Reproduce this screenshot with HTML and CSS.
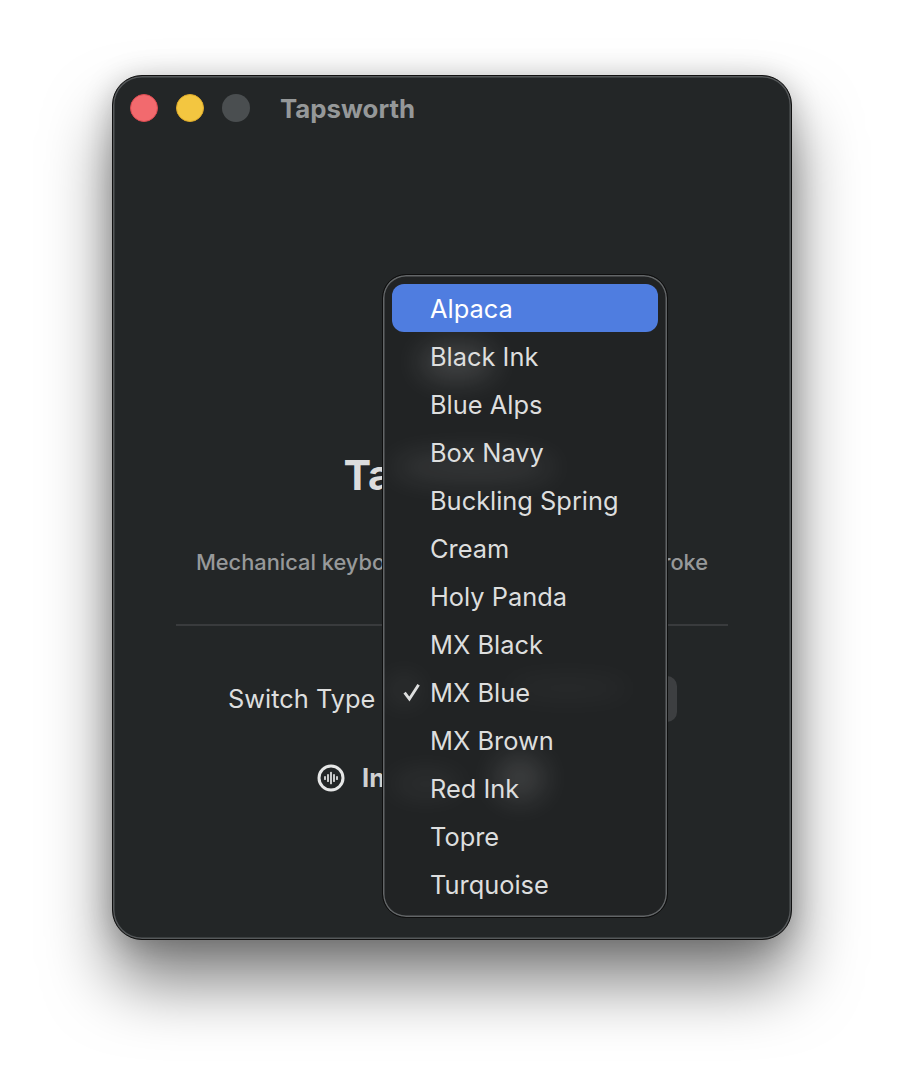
FILE: index.html
```html
<!DOCTYPE html>
<html lang="en">
<head>
<meta charset="utf-8">
<title>Tapsworth</title>
<link rel="stylesheet" href="styles.css">
</head>
<body>
<div class="window">
  <header class="titlebar">
    <span class="light red"></span>
    <span class="light yellow"></span>
    <span class="light gray"></span>
    <span class="window-title">Tapsworth</span>
  </header>
  <main class="content">
    <h1 class="app-name">Tapsworth</h1>
    <p class="tagline">Mechanical keyboard sounds for every keystroke</p>
    <hr class="divider">
    <div class="field">
      <span class="field-label">Switch Type</span>
      <div class="select"></div>
    </div>
    <div class="action">
      <svg class="wave-icon" viewBox="0 0 28 28" width="28" height="28" fill="none" stroke="currentColor" aria-hidden="true">
        <circle cx="14" cy="14" r="12" stroke-width="3"/>
        <path d="M8 12.8v2.4M11 10.8v6.4M14 8.6v10.8M17 10.8v6.4M20 12.8v2.4" stroke-width="1.7" stroke-linecap="round"/>
      </svg>
      <span class="action-label">In</span>
    </div>
  </main>
  <div class="menu">
    <span class="glow g1"></span>
    <span class="glow g2"></span>
    <span class="glow g3"></span>
    <span class="glow g4"></span>
    <span class="glow g5"></span>
    <span class="glow g6"></span>
    <div class="item active">Alpaca</div>
    <div class="item">Black Ink</div>
    <div class="item">Blue Alps</div>
    <div class="item">Box Navy</div>
    <div class="item">Buckling Spring</div>
    <div class="item">Cream</div>
    <div class="item">Holy Panda</div>
    <div class="item">MX Black</div>
    <div class="item checked">
      <svg class="check" viewBox="0 0 20 20" width="20" height="20" fill="none" stroke="currentColor" aria-hidden="true"><path d="M2.6 10.6 7.4 17 16.6 2.8" stroke-width="2.9"/></svg>
      MX Blue
    </div>
    <div class="item">MX Brown</div>
    <div class="item">Red Ink</div>
    <div class="item">Topre</div>
    <div class="item">Turquoise</div>
  </div>
</div>
</body>
</html>
```

FILE: styles.css
```css
* { box-sizing: border-box; }
html, body { margin: 0; height: 100%; background: #fff; }
body {
  padding: 75px 112px 0;
  font-family: Inter, "Noto Sans", "Liberation Sans", sans-serif;
  overflow: hidden;
}
.window {
  position: relative;
  width: 680px;
  height: 865px;
  background: #232627;
  border: 1px solid #111;
  border-radius: 30px;
  box-shadow: inset 0 0 0 1.5px #55585a, 0 42px 66px rgba(0,0,0,.5), 0 4px 30px rgba(0,0,0,.22);
}
.titlebar {
  display: flex;
  align-items: center;
  height: 64px;
  padding-left: 17px;
  gap: 18px;
}
.light { width: 28px; height: 28px; border-radius: 50%; }
.red { background: #f26a6e; border: 1px solid #dc4a50; }
.yellow { background: #f3c640; border: 1px solid #dfab2a; }
.gray { background: #4a4e50; }
.window-title {
  margin-left: 12px;
  font-size: 25.8px;
  font-weight: 700;
  color: #959899;
}
.content {
  display: flex;
  flex-direction: column;
  align-items: center;
  padding-top: 311px;
}
.app-name {
  margin: 0;
  font-size: 41.5px;
  line-height: 48px;
  font-weight: 700;
  color: #dcdddd;
}
.tagline {
  margin: 50px 0 0;
  font-size: 21.8px;
  line-height: 27px;
  font-weight: 500;
  color: #97999a;
}
.divider {
  width: 552px;
  height: 2px;
  margin: 48px 0 0;
  border: 0;
  background: #393b3d;
}
.field {
  display: flex;
  align-items: center;
  align-self: flex-start;
  gap: 21px;
  margin: 50px 0 0 115px;
}
.field-label { font-size: 25.4px; line-height: 46px; color: #dddede; }
.select {
  width: 281px;
  height: 46px;
  border-radius: 10px;
  background: #3d3f41;
}
.action {
  display: flex;
  align-items: center;
  align-self: flex-start;
  gap: 17px;
  margin: 41px 0 0 204px;
  color: #e6e7e7;
}
.wave-icon { display: block; }
.action-label { font-size: 25.4px; line-height: 30px; font-weight: 700; color: #d0d1d1; }
.menu {
  position: absolute;
  left: 269px;
  top: 198px;
  width: 286px;
  height: 644px;
  padding: 9px;
  overflow: hidden;
  background: #212324;
  border: 1px solid #0e0e0e;
  border-radius: 24px;
  box-shadow: inset 0 0 0 1.5px #626567;
}
.glow {
  position: absolute;
  background: rgba(255,255,255,.13);
  border-radius: 50%;
  filter: blur(14px);
}
.g1 { left: 36px; top: 68px; width: 76px; height: 38px; background: rgba(255,255,255,.15); }
.g2 { left: 8px; top: 178px; width: 165px; height: 28px; background: rgba(255,255,255,.1); }
.g3 { left: 112px; top: 480px; width: 50px; height: 46px; background: rgba(255,255,255,.13); }
.g4 { left: 8px; top: 498px; width: 70px; height: 22px; background: rgba(255,255,255,.07); }
.g5 { left: 6px; top: 400px; width: 30px; height: 30px; background: rgba(255,255,255,.07); }
.g6 { left: 120px; top: 402px; width: 130px; height: 22px; background: rgba(255,255,255,.04); }
.item {
  position: relative;
  height: 48px;
  padding-left: 38px;
  font-size: 25.4px;
  line-height: 50px;
  color: #dddede;
}
.item.active {
  background: #4f7de0;
  border-radius: 12px;
  color: #fff;
}
.check {
  position: absolute;
  left: 10px;
  top: 14px;
  color: #dddede;
}
```
